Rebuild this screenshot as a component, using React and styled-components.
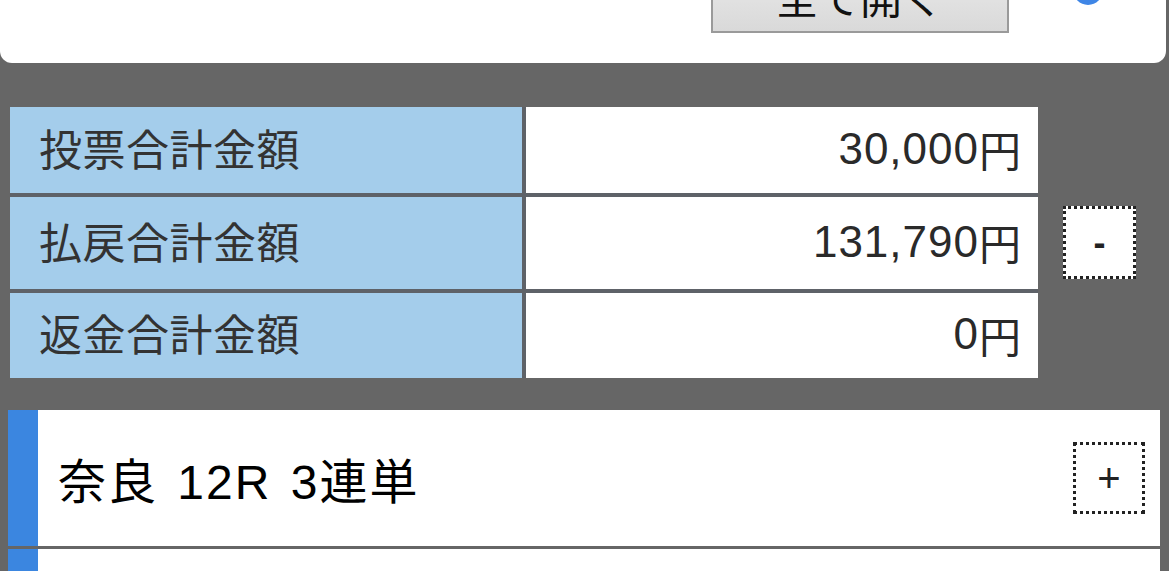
import React from 'react';
import styled, { createGlobalStyle } from 'styled-components';

const GlobalStyle = createGlobalStyle`
  html, body {
    margin: 0;
    padding: 0;
    background: #666666;
    font-family: "Liberation Sans", "Noto Sans CJK JP", sans-serif;
  }
`;

const Page = styled.div`
  width: 1169px;
  height: 571px;
  overflow: hidden;
  background: #666666;
`;

const TopCard = styled.div`
  height: 63px;
  margin-right: 3px;
  background: #ffffff;
  border-radius: 0 0 12px 12px;
  display: flex;
  align-items: flex-end;
  justify-content: flex-end;
  overflow: hidden;
`;

const OpenAllButton = styled.button`
  width: 298px;
  height: 84px;
  margin-bottom: 30px;
  padding: 0 0 14px;
  box-sizing: border-box;
  border: 2px solid #9a9a9a;
  background: linear-gradient(#eeeeee, #d9d9d9);
  font-family: "Noto Sans CJK JP", sans-serif;
  font-size: 42px;
  color: #111111;
  display: flex;
  align-items: flex-end;
  justify-content: center;
  line-height: 1;
`;

const RadioDot = styled.span`
  width: 30px;
  height: 30px;
  border-radius: 50%;
  background: #3f86e6;
  margin: 0 63px 58px 64px;
  flex-shrink: 0;
`;

const Summary = styled.div`
  display: flex;
  align-items: center;
  margin-top: 44px;
  padding-left: 10px;
`;

const Table = styled.div`
  width: 1028px;
  display: grid;
  grid-template-columns: 512px 512px;
  gap: 4px;
  background: #5e6268;
`;

const LabelCell = styled.div`
  height: ${(p) => p.h}px;
  box-sizing: border-box;
  padding: 0 0 7px 29px;
  background: #a4cdeb;
  display: flex;
  align-items: center;
  font-family: "Noto Sans CJK JP", sans-serif;
  font-size: 43px;
  letter-spacing: 0.5px;
  color: #333333;
`;

const ValueCell = styled.div`
  height: ${(p) => p.h}px;
  box-sizing: border-box;
  padding: 0 16px 3px 0;
  background: #ffffff;
  display: flex;
  align-items: center;
  justify-content: flex-end;
  font-size: 44px;
  letter-spacing: 1px;
  color: #2a2a2a;
`;

const Yen = styled.span`
  font-family: "Noto Sans CJK JP", sans-serif;
  font-size: 42px;
`;

const ToggleButton = styled.div`
  width: ${(p) => p.size}px;
  height: ${(p) => p.size}px;
  box-sizing: border-box;
  border: 3px dotted #222222;
  background: #ffffff;
  display: flex;
  align-items: center;
  justify-content: center;
  font-size: ${(p) => p.fs}px;
  font-weight: ${(p) => p.weight};
  color: #222222;
  flex-shrink: 0;
`;

const CollapseButton = styled(ToggleButton)`
  margin-left: 25px;
`;

const RaceList = styled.div`
  margin: 32px 9px 0 8px;
  display: flex;
  flex-direction: column;
  gap: 3px;
`;

const RaceCard = styled.div`
  height: 136px;
  background: #ffffff;
  border-left: 30px solid #3b86e0;
  display: flex;
  align-items: center;
  padding: 0 15px 0 20px;
`;

const RaceTitle = styled.div`
  flex: 1;
  font-size: 48px;
  letter-spacing: 2px;
  word-spacing: 4px;
  color: #000000;
  font-family: "Liberation Sans", "Noto Sans CJK JP", sans-serif;
`;

const rows = [
  { label: '投票合計金額', value: '30,000', h: 86 },
  { label: '払戻合計金額', value: '131,790', h: 92 },
  { label: '返金合計金額', value: '0', h: 85 },
];

export default function App() {
  return (
    <Page>
      <GlobalStyle />
      <TopCard>
        <OpenAllButton>全て開く</OpenAllButton>
        <RadioDot />
      </TopCard>

      <Summary>
        <Table>
          {rows.map((r) => (
            <React.Fragment key={r.label}>
              <LabelCell h={r.h}>{r.label}</LabelCell>
              <ValueCell h={r.h}>
                {r.value}
                <Yen>円</Yen>
              </ValueCell>
            </React.Fragment>
          ))}
        </Table>
        <CollapseButton size={73} fs={36} weight={700}>-</CollapseButton>
      </Summary>

      <RaceList>
        <RaceCard>
          <RaceTitle>奈良 12R 3連単</RaceTitle>
          <ToggleButton size={72} fs={40} weight={400}>+</ToggleButton>
        </RaceCard>
        <RaceCard />
      </RaceList>
    </Page>
  );
}
